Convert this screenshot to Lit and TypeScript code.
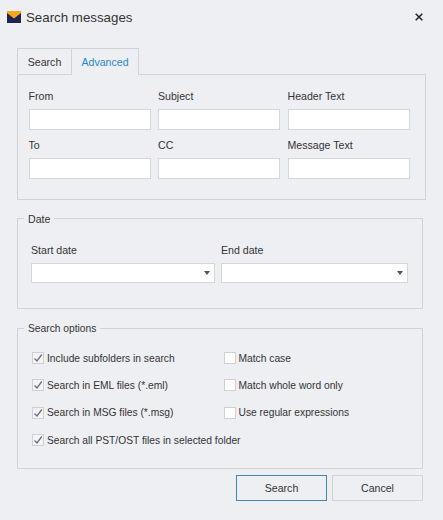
import { LitElement, html, css } from "lit";
import { customElement } from "lit/decorators.js";

@customElement("app-root")
export class AppRoot extends LitElement {
  static styles = css`
    :host { display: block; width: 443px; height: 520px; background: #eeeff3; font-family: "Liberation Sans", Arial, sans-serif; font-size: 10.6px; color: #333; overflow: hidden; }
    * { box-sizing: border-box; }
    .title { display: flex; align-items: center; height: 34px; padding: 0 20px 0 7px; gap: 5px; }
    .title-text { font-size: 13.3px; flex: 1; color: #333; }
    .logo, .close { display: block; }
    .body { padding: 14px 20px 0 17px; }
    .tabs { display: flex; height: 27px; margin-bottom: -1px; position: relative; z-index: 1; }
    .tab { border: 1px solid #d2d3d8; border-bottom: 0; display: flex; align-items: center; justify-content: center; height: 26px; }
    .tab.s { width: 54px; border-right: 0; }
    .tab.a { width: 68px; color: #2a87c8; height: 27px; background: #eeeff3; }
    .panel { width: 409px; height: 126px; border: 1px solid #d2d3d8; padding: 14px 15px 0 10.5px; display: grid; grid-template-columns: 122px 122px 122px; column-gap: 7.5px; grid-auto-rows: 49px; }
    .f { display: flex; flex-direction: column; }
    .f label { height: 14px; line-height: 14px; margin-bottom: 6px; }
    .in { height: 21px; background: #fff; border: 1px solid #d5d6da; }
    fieldset { margin: 0; padding: 0; border: 1px solid #d2d3d8; width: 406px; min-width: 0; }
    legend { margin-left: 6px; padding: 0 4px; line-height: 16px; height: 14px; }
    .date-g { margin-top: 11px; height: 98px; }
    .date { padding: 18px 14px 0 13px; display: flex; gap: 6px; }
    .date .f { width: 187px; }
    .date .f:first-child { width: 184px; }
    .combo { height: 20px; background: #fff; border: 1px solid #d5d6da; display: flex; align-items: center; justify-content: flex-end; padding-right: 4px; }
    .arrow { width: 0; height: 0; border-left: 3.5px solid transparent; border-right: 3.5px solid transparent; border-top: 4px solid #555; }
    .opts-g { margin-top: 12px; height: 148px; font-size: 10.25px; }
    .opts { padding: 16px 0 0 14px; display: grid; grid-template-columns: 191.5px 180px; grid-auto-rows: 27.4px; }
    .ck { display: flex; align-items: center; gap: 3px; height: 14px; white-space: nowrap; }
    .wide { grid-column: 1 / 3; }
    .box { width: 12px; height: 12px; border: 1px solid #cfd0d5; background: #f3f4f7; display: flex; align-items: center; justify-content: center; flex: none; }
    .box.off { background: #fff; }
    .btns { display: flex; justify-content: flex-end; gap: 5px; width: 406px; margin-top: 6px; }
    .btn { width: 91px; height: 26px; display: flex; align-items: center; justify-content: center; border: 1px solid #d2d3d8; }
    .btn.p { border-color: #3f87ad; }
  `;

  private field(l: string) {
    return html`<div class="f"><label>${l}</label><div class="in"></div></div>`;
  }
  private date(l: string) {
    return html`<div class="f"><label>${l}</label><div class="combo"><span class="arrow"></span></div></div>`;
  }
  private check(l: string, on: boolean, cls = "") {
    return html`<div class="ck ${cls}"><span class="box ${on ? "" : "off"}">${on
      ? html`<svg width="10" height="10" viewBox="0 0 10 10"><path d="M1.5 5.5 L4 8 L8.8 1.5" fill="none" stroke="#6d6f74" stroke-width="1.3"/></svg>`
      : ""}</span><span>${l}</span></div>`;
  }

  render() {
    return html`
      <div class="title">
        <svg class="logo" width="14" height="12" viewBox="0 0 14 12">
          <rect x="0" y="1" width="14" height="11" fill="#1d2450"/>
          <path d="M0 0 H14 V2 L7 7.5 L0 2 Z" fill="#f2a71f"/>
        </svg>
        <span class="title-text">Search messages</span>
        <svg class="close" width="8" height="8" viewBox="0 0 8 8"><path d="M0.7 0.7 L7.3 7.3 M7.3 0.7 L0.7 7.3" stroke="#222" stroke-width="1.5"/></svg>
      </div>
      <div class="body">
        <div class="tabs"><div class="tab s">Search</div><div class="tab a">Advanced</div></div>
        <div class="panel">
          ${["From", "Subject", "Header Text", "To", "CC", "Message Text"].map((l) => this.field(l))}
        </div>
        <fieldset class="date-g">
          <legend>Date</legend>
          <div class="date">${this.date("Start date")}${this.date("End date")}</div>
        </fieldset>
        <fieldset class="opts-g">
          <legend>Search options</legend>
          <div class="opts">
            ${this.check("Include subfolders in search", true)}${this.check("Match case", false)}
            ${this.check("Search in EML files (*.eml)", true)}${this.check("Match whole word only", false)}
            ${this.check("Search in MSG files (*.msg)", true)}${this.check("Use regular expressions", false)}
            ${this.check("Search all PST/OST files in selected folder", true, "wide")}
          </div>
        </fieldset>
        <div class="btns"><div class="btn p">Search</div><div class="btn">Cancel</div></div>
      </div>
    `;
  }
}
